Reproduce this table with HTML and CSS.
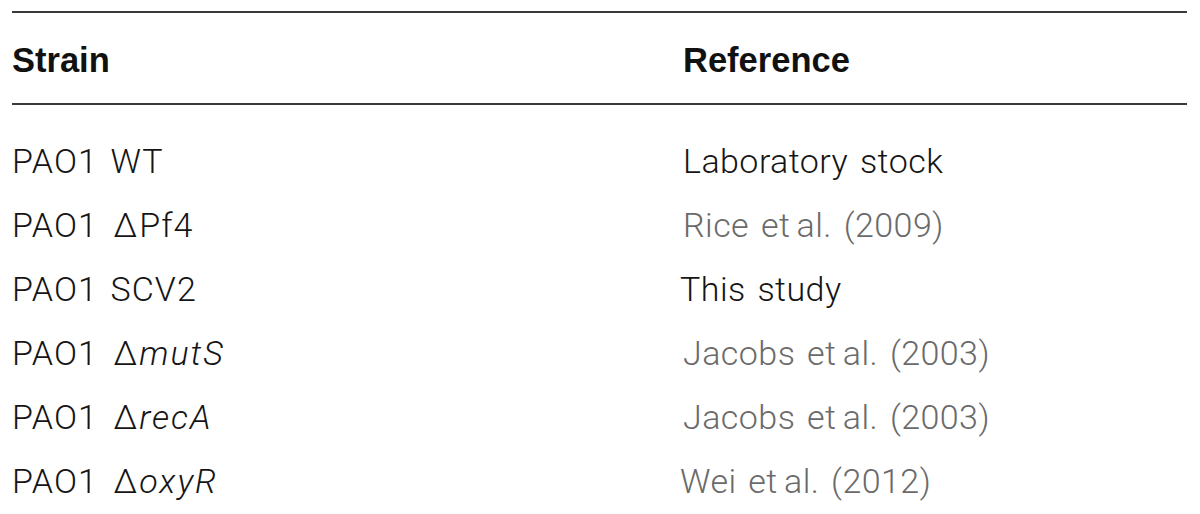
FILE: index.html
```html
<!DOCTYPE html>
<html>
<head>
<meta charset="utf-8">
<link rel="stylesheet" href="styles.css">
</head>
<body>
<div class="table">
  <div class="row head">
    <div class="c1">Strain</div>
    <div class="c2">Reference</div>
  </div>
  <div class="body">
    <div class="row"><div class="c1">PAO1 WT</div><div class="c2">Laboratory stock</div></div>
    <div class="row"><div class="c1">PAO1 <span class="delta">∆</span>Pf4</div><div class="c2 cite">Rice et<span class="nb"> </span>al. (2009)</div></div>
    <div class="row"><div class="c1">PAO1 SCV2</div><div class="c2 shift">This study</div></div>
    <div class="row"><div class="c1">PAO1 <span class="delta">∆</span><i>mutS</i></div><div class="c2 cite">Jacobs et<span class="nb"> </span>al. (2003)</div></div>
    <div class="row"><div class="c1">PAO1 <span class="delta">∆</span><i>recA</i></div><div class="c2 cite">Jacobs et<span class="nb"> </span>al. (2003)</div></div>
    <div class="row"><div class="c1">PAO1 <span class="delta">∆</span><i>oxyR</i></div><div class="c2 cite shift">Wei et<span class="nb"> </span>al. (2012)</div></div>
  </div>
</div>
</body>
</html>
```
FILE: styles.css
```css
html, body {
  margin: 0;
  padding: 0;
  background: #ffffff;
}
body {
  padding: 11px 0 0 12px;
}
.table {
  width: 1175px;
  border-top: 2px solid #3a3a3a;
}
.row {
  display: grid;
  grid-template-columns: 671px 1fr;
}
.head {
  font-family: "Liberation Sans", Arial, sans-serif;
  font-weight: bold;
  font-size: 34.5px;
  color: #111;
  line-height: 86px;
  padding-top: 4px;
  border-bottom: 2px solid #3a3a3a;
}
.body {
  padding-top: 24px;
  font-family: Roboto, "Liberation Sans", sans-serif;
  font-weight: 300;
  font-size: 34px;
  word-spacing: 3px;
  line-height: 64px;
  color: #151515;
}
.body .c1 {
  white-space: nowrap;
  letter-spacing: 1.1px;
}
.body .c1 i {
  letter-spacing: 2px;
}
.body .c2 {
  letter-spacing: 0.45px;
}
.delta {
  margin-left: 3px;
  margin-right: 1px;
}
.cite {
  color: #6a6a6a;
}
.shift {
  margin-left: -3px;
}
.body .c2 .nb {
  letter-spacing: -5px;
}
```
